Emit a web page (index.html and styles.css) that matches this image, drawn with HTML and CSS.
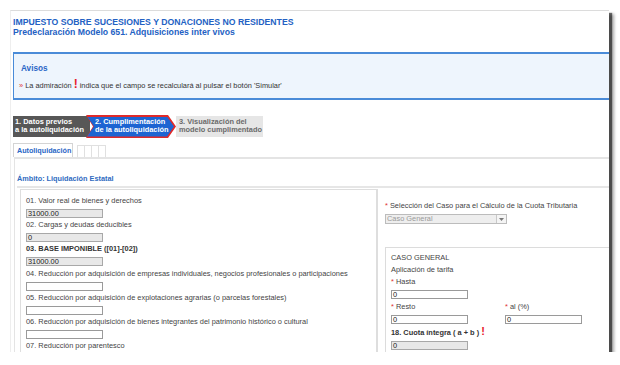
FILE: index.html
```html
<!DOCTYPE html>
<html lang="es">
<head>
<meta charset="utf-8">
<title>Modelo 651</title>
<link rel="stylesheet" href="styles.css">
</head>
<body>
<div class="frame">
  <div class="head">
    <div class="t1">IMPUESTO SOBRE SUCESIONES Y DONACIONES NO RESIDENTES</div>
    <div class="t2">Predeclaración Modelo 651. Adquisiciones inter vivos</div>
  </div>

  <div class="avisos">
    <div class="avisos-t">Avisos</div>
    <div class="avisos-l"><span class="raquo">»</span> La admiración <span class="excl">!</span> indica que el campo se recalculará al pulsar el botón 'Simular'</div>
  </div>

  <div class="steps">
    <div class="step s1">1. Datos previos<br>a la autoliquidación</div>
    <div class="s2"><div class="s2in">2. Cumplimentación<br>de la autoliquidación</div></div>
    <div class="step s3">3. Visualización del<br>modelo cumplimentado</div>
  </div>

  <div class="tabs">
    <div class="tab">Autoliquidación</div>
    <div class="mini"></div><div class="mini"></div><div class="mini"></div><div class="mini"></div>
  </div>

  <div class="panel">
    <div class="ambito">Ámbito: Liquidación Estatal</div>
    <div class="cols">
      <div class="lbox">
        <div class="lbl">01. Valor real de bienes y derechos</div>
        <div class="inp dis">31000.00</div>
        <div class="lbl">02. Cargas y deudas deducibles</div>
        <div class="inp dis">0</div>
        <div class="lbl b">03. BASE IMPONIBLE ([01]-[02])</div>
        <div class="inp dis">31000.00</div>
        <div class="lbl">04. Reducción por adquisición de empresas individuales, negocios profesionales o participaciones</div>
        <div class="inp"></div>
        <div class="lbl">05. Reducción por adquisición de explotaciones agrarias (o parcelas forestales)</div>
        <div class="inp"></div>
        <div class="lbl">06. Reducción por adquisición de bienes integrantes del patrimonio histórico o cultural</div>
        <div class="inp"></div>
        <div class="lbl">07. Reducción por parentesco</div>
        <div class="inp"></div>
      </div>
      <div class="rcol">
        <div class="lbl sel-lbl"><span class="ast">*</span> Selección del Caso para el Cálculo de la Cuota Tributaria</div>
        <div class="select"><span class="sel-txt">Caso General</span><span class="sel-btn"><svg width="5" height="3" viewBox="0 0 5 3"><path d="M0 0H5L2.5 3Z" fill="#777"/></svg></span></div>
        <div class="caso">
          <div class="lbl">CASO GENERAL</div>
          <div class="lbl">Aplicación de tarifa</div>
          <div class="lbl"><span class="ast">*</span> Hasta</div>
          <div class="inp r">0</div>
          <div class="pair">
            <div class="fld">
              <div class="lbl"><span class="ast">*</span> Resto</div>
              <div class="inp r">0</div>
            </div>
            <div class="fld">
              <div class="lbl"><span class="ast">*</span> al (%)</div>
              <div class="inp r">0</div>
            </div>
          </div>
          <div class="lbl b">18. Cuota íntegra ( a + b ) <span class="excl2">!</span></div>
          <div class="inp r dis">0</div>
        </div>
      </div>
    </div>
  </div>
</div>
</body>
</html>
```

FILE: styles.css
```css
html, body {
  margin: 0;
  padding: 0;
  background: #fff;
}
body {
  font-family: "Liberation Sans", Arial, sans-serif;
  font-size: 7.4px;
  color: #444;
}
.frame {
  margin: 10px 0 0 10px;
  width: 598px;
  height: 341px;
  background: #fff;
  border-top: 1px solid #dcdcdc;
  border-left: 1px solid #eee;
  box-shadow: 3px 3px 1px rgba(0, 0, 0, 0.55), 5px 4px 3px rgba(0, 0, 0, 0.35);
  overflow: hidden;
}
.head {
  padding: 6px 0 0 2px;
  color: #2361c3;
  font-weight: bold;
  font-size: 8.7px;
  line-height: 10px;
}
.avisos {
  margin: 15px 0 0 2px;
  width: 640px;
  background: #eef5fd;
  border-top: 2px solid #4a8bd8;
  border-bottom: 2px solid #4a8bd8;
  border-left: 1px solid #4a8bd8;
  padding: 9px 0 7px 7px;
  box-sizing: border-box;
  height: 48px;
}
.avisos-t {
  color: #2a66c6;
  font-weight: bold;
  font-size: 8.2px;
  line-height: 12px;
}
.avisos-l {
  margin-top: 4px;
  line-height: 12px;
  margin-left: -2px;
  color: #333;
}
.raquo {
  color: #e03a3a;
}
.excl {
  color: #e8202a;
  font-weight: bold;
  font-size: 12px;
  line-height: 10px;
}
.steps {
  display: flex;
  margin: 16px 0 0 2px;
  height: 21px;
  font-weight: bold;
  font-size: 7.4px;
  line-height: 8.4px;
}
.step {
  box-sizing: border-box;
  padding-top: 2px;
}
.s1 {
  width: 77px;
  background: #575757;
  color: #fff;
  padding-left: 2px;
}
.s2 {
  margin: -1px 0 -1px -4px;
  width: 90px;
  height: 23px;
  background: #e02a2a;
  clip-path: polygon(0 0, calc(100% - 8px) 0, 100% 50%, calc(100% - 8px) 100%, 0 100%, 7px 50%);
  padding: 1.5px 2px 1.5px 1px;
  box-sizing: border-box;
  position: relative;
  z-index: 1;
}
.s2in {
  height: 100%;
  background: #1d64d2;
  color: #fff;
  clip-path: polygon(0 0, calc(100% - 7px) 0, 100% 50%, calc(100% - 7px) 100%, 0 100%, 7px 50%);
  padding: 1px 0 0 8px;
  box-sizing: border-box;
}
.s3 {
  width: 87px;
  margin-left: 0;
  background: #e6e6e6;
  color: #6b6b6b;
  padding-left: 3px;
}
.tabs {
  display: flex;
  align-items: flex-end;
  margin: 6px 0 0 2px;
  height: 14px;
  gap: 0;
}
.tab {
  height: 14px;
  box-sizing: border-box;
  border: 1px solid #d4d4d4;
  border-bottom: none;
  padding: 2px 2px 0 3px;
  color: #2a66c6;
  font-weight: bold;
  font-size: 7.2px;
  width: 60px;
}
.tab + .mini {
  margin-left: 4px;
}
.mini {
  width: 6px;
  height: 11px;
  border: 1px solid #e0e0e0;
  border-bottom: none;
  margin-right: -1px;
}
.panel {
  margin-left: 3px;
  width: 640px;
  height: 200px;
  border-top: 2px solid #e4e4e4;
  border-left: 1px solid #e4e4e4;
  padding: 15px 0 0 2px;
  box-sizing: border-box;
}
.ambito {
  color: #2f6bbf;
  font-weight: bold;
  font-size: 7.3px;
  line-height: 10px;
  padding-bottom: 2px;
  border-bottom: 2px solid #e6e6e6;
}
.cols {
  display: flex;
  margin-top: 1px;
  align-items: flex-start;
}
.lbox {
  flex: none;
  margin-left: 3px;
  width: 358px;
  height: 200px;
  box-sizing: border-box;
  border: 1px solid #dedede;
  border-right-width: 2px;
  padding: 5px 0 0 5px;
}
.lbl {
  line-height: 12px;
  white-space: nowrap;
}
.b {
  font-weight: bold;
  color: #333;
}
.inp {
  margin-top: 2px;
  margin-bottom: 1.2px;
  width: 77px;
  height: 9px;
  box-sizing: border-box;
  border: 1px solid #9a9a9a;
  background: #fff;
  font-size: 7.4px;
  line-height: 7px;
  padding-left: 1px;
  color: #222;
}
.inp.dis {
  background: #e8e8e8;
  border-color: #a8a8a8;
}
.inp.r {
  margin-bottom: 2px;
}
.rcol {
  flex: none;
  margin-left: 7px;
  padding-top: 11px;
  width: 260px;
}
.ast {
  color: #e03030;
}
.select {
  margin-top: 2px;
  width: 122px;
  height: 10px;
  box-sizing: border-box;
  border: 1px solid #bcbcbc;
  background: #eeeeee;
  display: flex;
  justify-content: space-between;
}
.sel-txt {
  color: #9a9a9a;
  line-height: 8px;
  padding-left: 1px;
}
.sel-btn {
  width: 9px;
  border-left: 1px solid #c8c8c8;
  background: #f4f4f4;
  display: flex;
  align-items: center;
  justify-content: center;
}
.caso {
  margin-top: 23px;
  width: 260px;
  height: 120px;
  border: 1px solid #dcdcdc;
  padding: 4px 0 0 5px;
  box-sizing: border-box;
}
.pair {
  display: flex;
  gap: 37px;
}
.excl2 {
  color: #e8202a;
  font-weight: bold;
  font-size: 11px;
  line-height: 10px;
}
```
